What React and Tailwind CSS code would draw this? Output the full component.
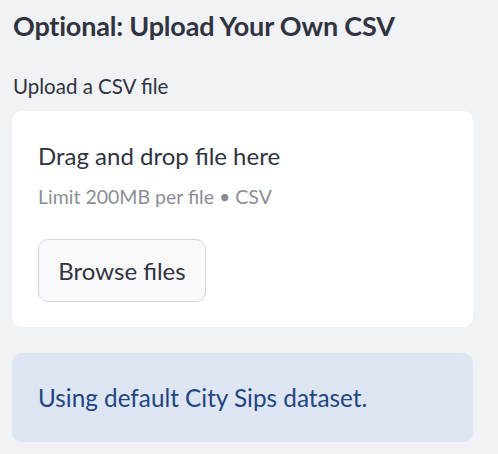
import React from 'react'

function App() {
    return (
        <div className="min-h-[454px] w-[498px] bg-[#f0f2f6] font-['Lato',sans-serif] text-[#31333f]">
            <div className="px-[13px] pt-[8px]">
                <h3 className="text-[27px] font-bold leading-[36px] tracking-[-0.2px]">Optional: Upload Your Own CSV</h3>
                <p className="mt-[30px] text-[20.5px] leading-[24px]">Upload a CSV file</p>
            </div>
            <div className="mx-[12px] mt-[13px] w-[461px] h-[216px] rounded-[10px] bg-white px-[26px] pt-[30px]">
                <p className="text-[24px] leading-[30px]">Drag and drop file here</p>
                <p className="mt-[14px] text-[19.5px] leading-[24px] text-[#8b8d96]">Limit 200MB per file • CSV</p>
                <button className="mt-[30px] w-[168px] h-[63px] rounded-[10px] border border-[#d5d6da] bg-[#f9f9fb] text-[24px]">Browse files</button>
            </div>
            <div className="mx-[12px] mt-[26px] w-[461px] h-[89px] rounded-[10px] bg-[#dee5f2] px-[26px] flex items-center">
                <p className="text-[24.3px] leading-[30px] text-[#1e4682]">Using default City Sips dataset.</p>
            </div>
        </div>
    )
}

export default App
